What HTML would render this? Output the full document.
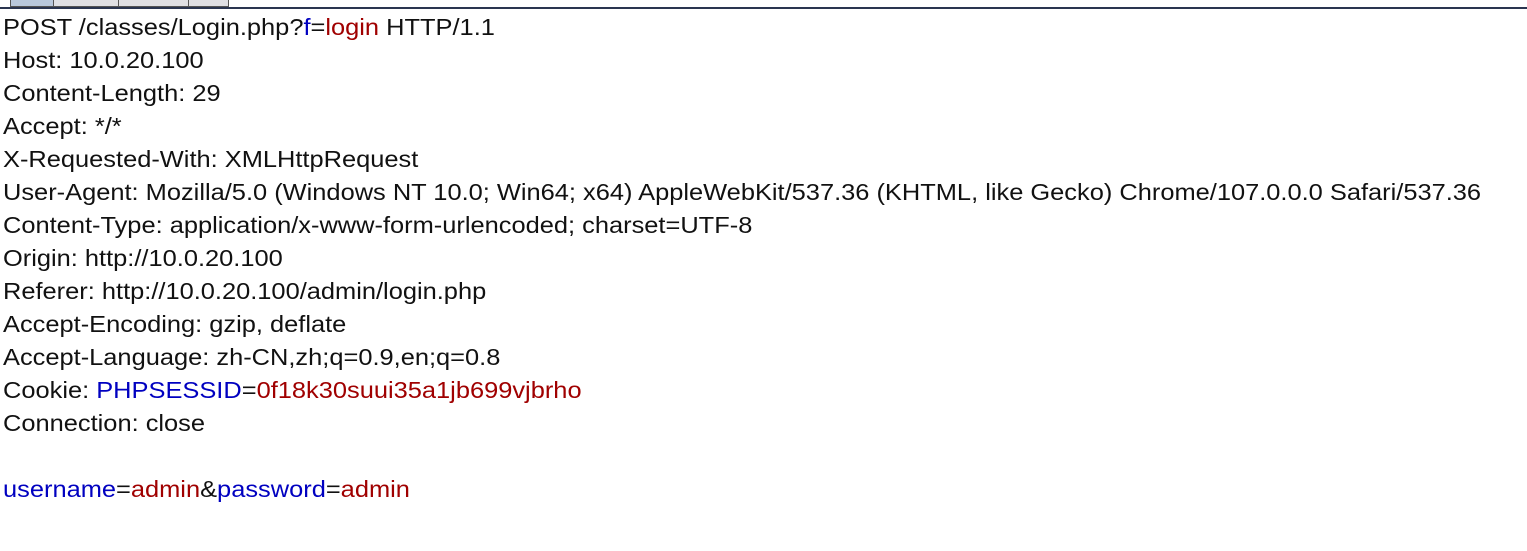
<!DOCTYPE html>
<html><head><style>
body{margin:0;width:1527px;height:551px;background:#fff;overflow:hidden;position:relative;font-family:"Liberation Sans",sans-serif;}
.tabs{position:absolute;top:0;left:0;width:1527px;height:7px;border-bottom:2px solid #2a3550;}
.t{position:absolute;top:0;height:7px;background:#e0e0e4;border:1px solid #555;border-top:none;box-sizing:border-box;}
pre{position:absolute;left:3px;top:11px;margin:0;font-family:"Liberation Sans",sans-serif;font-size:23px;line-height:33px;color:#111;white-space:pre;transform:scaleX(1.105);transform-origin:0 0;}
.b{color:#0000c0}.r{color:#a00000}
</style></head><body>
<div class="tabs">
<div class="t" style="left:10px;width:44px;background:#b9c8dc"></div>
<div class="t" style="left:53px;width:66px"></div>
<div class="t" style="left:118px;width:71px"></div>
<div class="t" style="left:188px;width:41px"></div>
</div>
<pre>POST /classes/Login.php?<span class="b">f</span>=<span class="r">login</span> HTTP/1.1
Host: 10.0.20.100
Content-Length: 29
Accept: */*
X-Requested-With: XMLHttpRequest
User-Agent: Mozilla/5.0 (Windows NT 10.0; Win64; x64) AppleWebKit/537.36 (KHTML, like Gecko) Chrome/107.0.0.0 Safari/537.36
Content-Type: application/x-www-form-urlencoded; charset=UTF-8
Origin: http://10.0.20.100
Referer: http://10.0.20.100/admin/login.php
Accept-Encoding: gzip, deflate
Accept-Language: zh-CN,zh;q=0.9,en;q=0.8
Cookie: <span class="b">PHPSESSID</span>=<span class="r">0f18k30suui35a1jb699vjbrho</span>
Connection: close

<span class="b">username</span>=<span class="r">admin</span>&amp;<span class="b">password</span>=<span class="r">admin</span></pre>
</body></html>
